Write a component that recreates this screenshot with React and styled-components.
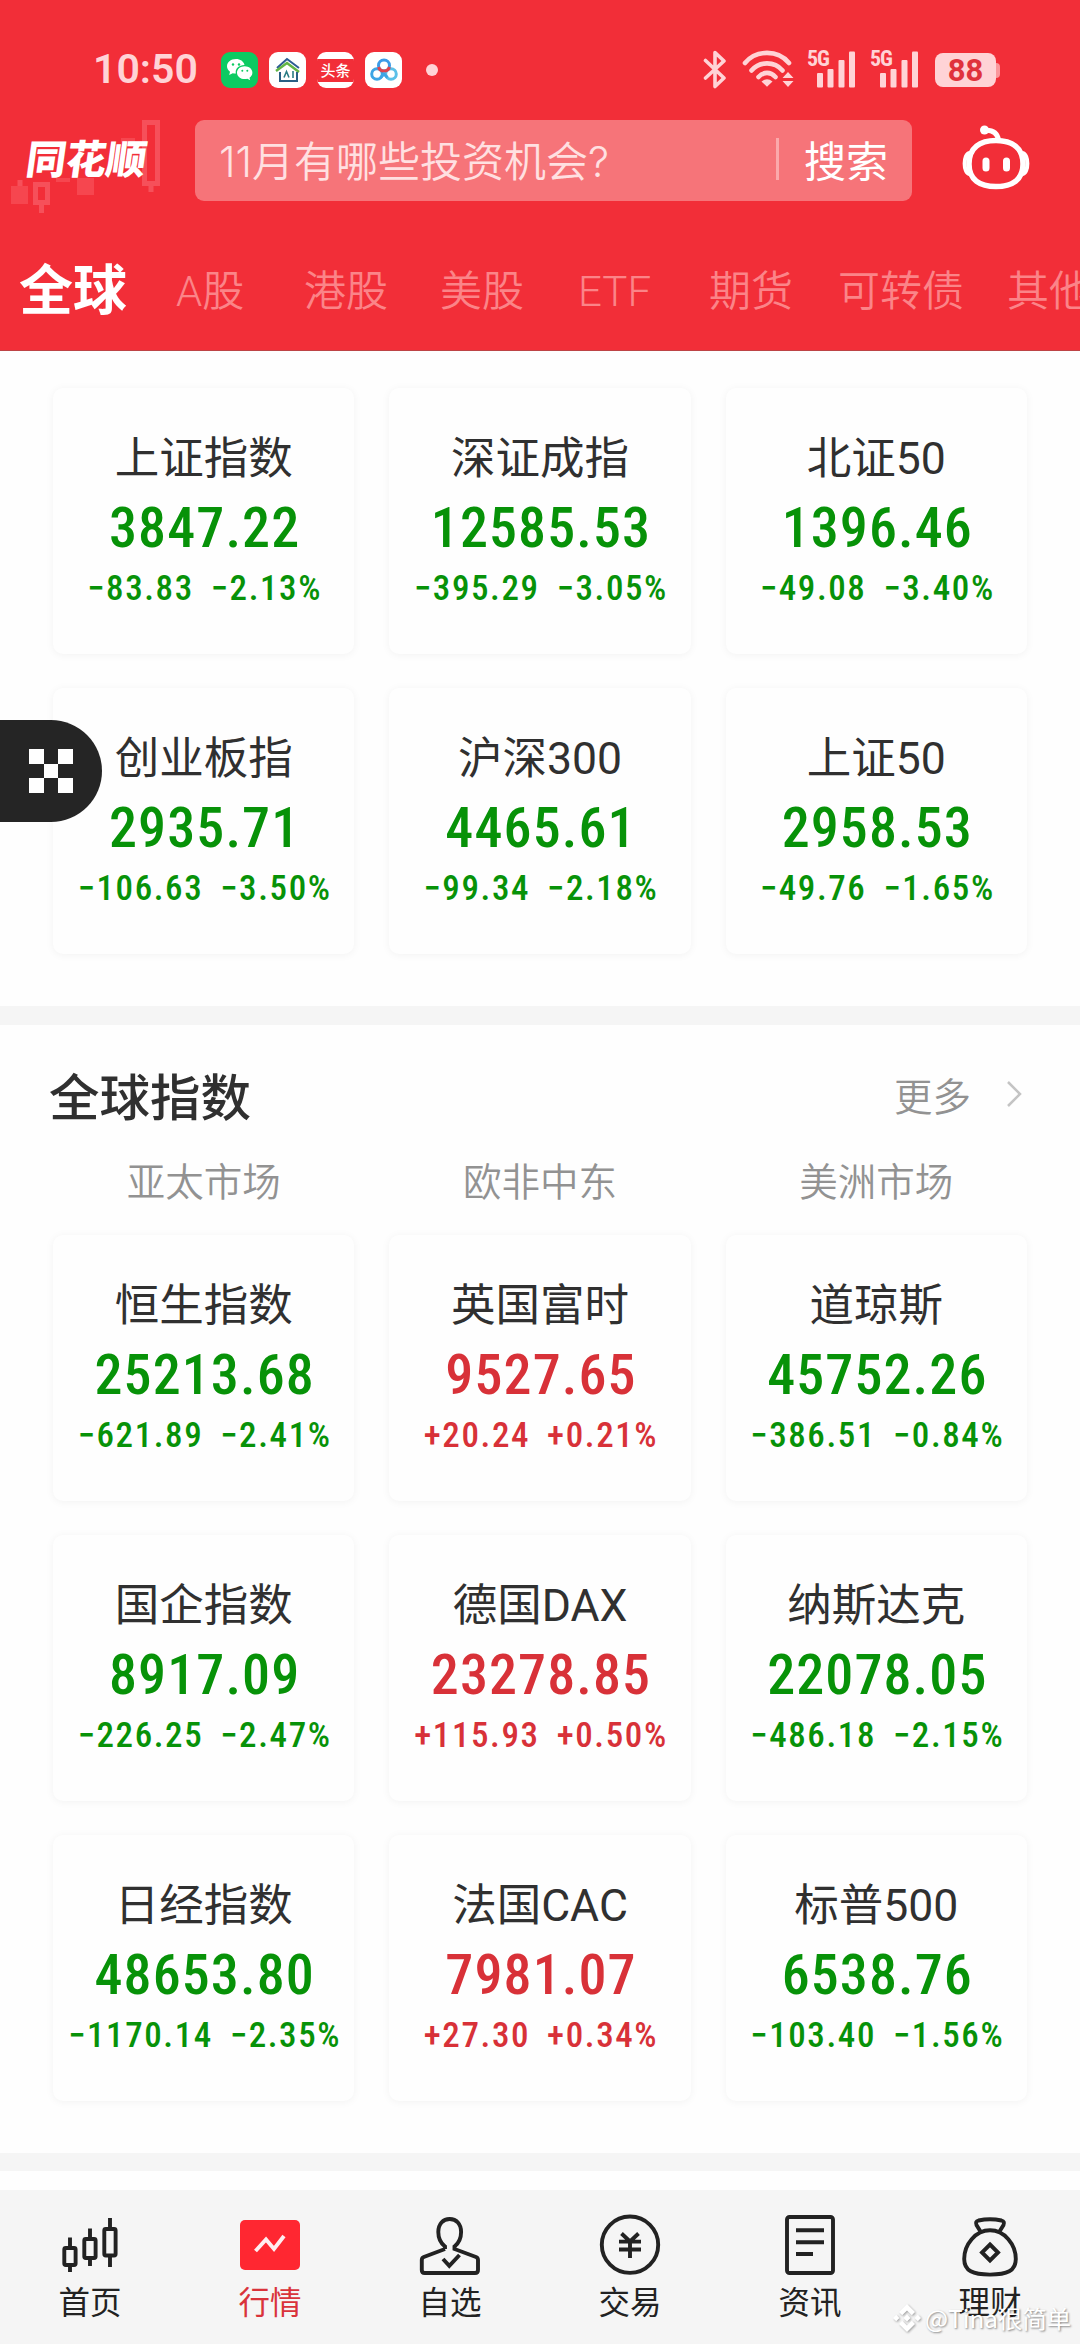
import React from "react";
import styled, { createGlobalStyle } from "styled-components";

const Global = createGlobalStyle`
  * { box-sizing: border-box; }
  body { margin: 0; background: #fefefe; }
`;

const cjk = `"Noto Sans CJK SC", sans-serif`;

const Screen = styled.div`
  position: relative;
  width: 1080px;
  height: 2344px;
  overflow: hidden;
  display: flex;
  flex-direction: column;
  background: #fefefe;
  font-family: ${cjk};
  color: #303030;
`;

const Header = styled.header`
  height: 351px;
  flex: none;
  background: #f22e38;
  border-bottom: 1px solid #bd4345;
  color: #fff;
`;

const StatusBar = styled.div`
  height: 120px;
  padding: 20px 80px 0 93px;
  display: flex;
  align-items: center;
  color: #ffd3d6;
`;

const Clock = styled.span`
  font: 600 41px/50px Roboto, sans-serif;
  width: 128px;
  padding-bottom: 2px;
`;

const AppIcons = styled.div`
  display: flex;
  gap: 11px;
  align-items: center;
  flex: 1;
`;

const AppTile = styled.div`
  width: 37px;
  height: 36px;
  border-radius: 9px;
  overflow: hidden;
  background: ${(p) => p.$bg || "#fff"};
  display: flex;
  align-items: center;
  justify-content: center;
`;

const NewsStrip = styled.span`
  width: 37px;
  height: 23px;
  background: #f22e38;
  color: #fff;
  text-align: center;
  white-space: nowrap;
  font: 500 15px/22px ${cjk};
`;

const MoreDot = styled.i`
  width: 12px;
  height: 12px;
  border-radius: 50%;
  background: #ffd3d6;
  margin-left: 13px;
`;

const StatusRight = styled.div`
  display: flex;
  align-items: center;
`;

const WifiIcon = styled.svg`
  margin: 0 14px 0 15.5px;
`;

const SignalIcon = styled.svg`
  overflow: visible;
  margin-right: ${(p) => p.$gap}px;
`;

const Battery = styled.div`
  width: 61px;
  height: 34px;
  border-radius: 8px;
  background: #ffd3d6;
  color: #e0323c;
  text-align: center;
  font: 700 31px/35px Roboto, sans-serif;
`;

const BatteryTip = styled.i`
  width: 4px;
  height: 15px;
  border-radius: 0 4px 4px 0;
  background: #fb979c;
`;

const SearchRow = styled.div`
  display: flex;
  height: 81px;
`;

const LogoBox = styled.div`
  position: relative;
  width: 195px;
  height: 81px;
  padding: 12px 0 0 27px;
`;

const LogoArt = styled.svg`
  position: absolute;
  left: 0;
  top: 0;
`;

const LogoText = styled.span`
  position: relative;
  display: block;
  font: 900 40px/50px ${cjk};
  transform: skewX(-8deg);
`;

const SearchBox = styled.div`
  width: 717px;
  height: 81px;
  border-radius: 9px;
  background: #f67479;
  display: flex;
  align-items: center;
  padding: 0 24px 4px 24px;
  font-size: 42px;
`;

const Placeholder = styled.span`
  flex: 1;
  font-family: Inter, ${cjk};
  font-weight: 350;
  color: #ffe0e1;
`;

const SearchAction = styled.span`
  border-left: 3px solid #fba9ab;
  padding-left: 25px;
  line-height: 42px;
  color: #fff;
`;

const Robot = styled.svg`
  margin-left: 48px;
`;

const Tabs = styled.nav`
  height: 149px;
  padding: 33px 0 0 18px;
  display: flex;
  align-items: center;
  white-space: nowrap;
  overflow: hidden;
`;

const Tab = styled.span`
  flex: none;
  width: ${(p) => p.$w}px;
  font-family: Roboto, ${cjk};
  font-size: 42px;
  line-height: 60px;
  font-weight: 350;
  color: #fb8488;
`;

const ActiveTab = styled(Tab)`
  font-size: 54px;
  font-weight: 700;
  color: #fff;
  padding: 0 0 1px 1px;
`;

const Grid = styled.section`
  display: grid;
  grid-template-columns: repeat(3, 1fr);
  grid-auto-rows: 266px;
  gap: 34px 35px;
  padding: 0 53px;
  margin-top: ${(p) => p.$top}px;
  flex: none;
`;

const Card = styled.article`
  border-radius: 10px;
  background: #fefefe;
  box-shadow: 0 1px 8px rgba(0, 0, 0, 0.05);
  display: flex;
  flex-direction: column;
  align-items: center;
  padding-top: 41px;
  white-space: nowrap;
`;

const Name = styled.h3`
  margin: 0;
  font-family: Roboto, ${cjk};
  font-size: 44.5px;
  line-height: 60px;
  font-weight: 400;
`;

const Price = styled.div`
  font: 500 56px/66px "Roboto Condensed", Roboto, sans-serif;
  margin-top: 6px;
  padding-left: 2px;
  letter-spacing: 1.1px;
  color: ${(p) => (p.$up ? "#d83138" : "#079208")};
`;

const Change = styled.div`
  font: 460 35px/40px "Roboto Condensed", Roboto, sans-serif;
  margin-top: 8px;
  padding-left: 2px;
  letter-spacing: 1.6px;
  display: flex;
  gap: 17px;
  color: ${(p) => (p.$up ? "#d83138" : "#079208")};
`;

const Band = styled.div`
  height: ${(p) => p.$h}px;
  margin-top: 52px;
  background: #f5f5f5;
  flex: none;
`;

const SectionHead = styled.div`
  display: flex;
  align-items: center;
  padding: 0 58px 0 49px;
  margin-top: 39px;
  height: 60px;
`;

const SectionTitle = styled.h2`
  margin: 0;
  flex: 1;
  font-size: 50.5px;
  line-height: 60px;
  font-weight: 450;
`;

const More = styled.span`
  font-size: 38.5px;
  font-weight: 350;
  color: #929292;
  margin-right: 35px;
`;

const Markets = styled.div`
  display: grid;
  grid-template-columns: repeat(3, 1fr);
  gap: 35px;
  padding: 0 53px;
  margin-top: 25px;
  height: 60px;
  text-align: center;
  font-size: 38.5px;
  line-height: 60px;
  font-weight: 350;
  color: #929292;
`;

const FloatButton = styled.button`
  position: absolute;
  left: 0;
  top: 720px;
  width: 102px;
  height: 102px;
  border: 0;
  padding: 0 0 0 29px;
  border-radius: 0 51px 51px 0;
  background: #252525;
  display: flex;
  align-items: center;
`;

const BottomNav = styled.nav`
  margin-top: auto;
  height: 154px;
  flex: none;
  background: #f5f5f5;
  display: grid;
  grid-template-columns: repeat(6, 1fr);
`;

const NavItem = styled.div`
  display: flex;
  flex-direction: column;
  align-items: center;
  padding-top: 23px;
  font-size: 31.5px;
  line-height: 40px;
  color: ${(p) => (p.$active ? "#d9333b" : "#222")};
`;

const NavIcon = styled.svg`
  margin-bottom: 3px;
  fill: none;
  stroke: #222;
  stroke-width: 3.9;
`;

const Watermark = styled.div`
  position: absolute;
  left: 893px;
  top: 2297px;
  height: 41px;
  display: flex;
  align-items: center;
  gap: 4px;
  font-size: 24.4px;
  line-height: 40px;
  color: #fff;
  white-space: nowrap;
  text-shadow: 1px 1px 2px rgba(0, 0, 0, 0.45);
  svg { filter: drop-shadow(1px 1px 1px rgba(0, 0, 0, 0.35)); }
`;

const domestic = [
  ["上证指数", "3847.22", "−83.83", "−2.13%"],
  ["深证成指", "12585.53", "−395.29", "−3.05%"],
  ["北证50", "1396.46", "−49.08", "−3.40%"],
  ["创业板指", "2935.71", "−106.63", "−3.50%"],
  ["沪深300", "4465.61", "−99.34", "−2.18%"],
  ["上证50", "2958.53", "−49.76", "−1.65%"],
];

const world = [
  ["恒生指数", "25213.68", "−621.89", "−2.41%"],
  ["英国富时", "9527.65", "+20.24", "+0.21%"],
  ["道琼斯", "45752.26", "−386.51", "−0.84%"],
  ["国企指数", "8917.09", "−226.25", "−2.47%"],
  ["德国DAX", "23278.85", "+115.93", "+0.50%"],
  ["纳斯达克", "22078.05", "−486.18", "−2.15%"],
  ["日经指数", "48653.80", "−1170.14", "−2.35%"],
  ["法国CAC", "7981.07", "+27.30", "+0.34%"],
  ["标普500", "6538.76", "−103.40", "−1.56%"],
];

const tabs = [["A股", 128], ["港股", 136], ["美股", 138], ["ETF", 131], ["期货", 129], ["可转债", 169], ["其他", 84]];

const navItems = [
  ["首页", (
    <>
      <rect x="6.300" y="35" width="11.300" height="17" rx="1.500" />
      <path d="M12 24.500V35M12 52v7" />
      <rect x="26.300" y="26" width="11.300" height="19" rx="1.500" />
      <path d="M32 15.500V26M32 45v8" />
      <rect x="46.300" y="16" width="11.300" height="26.500" rx="1.500" />
      <path d="M52 5v11M52 42v12" />
    </>
  )],
  ["行情", (
    <>
      <rect x="2" y="7" width="60" height="50" rx="5" fill="#ff2731" stroke="none" />
      <path d="M17.500 38L28 26.500l8 9.500L46 23" stroke="#ffeef0" />
    </>
  )],
  ["自选", (
    <>
      <path d="M27 36v-2.500C22.500 30 20.300 25.500 20.300 19 20.300 11 25 6 31.700 6S43.100 11 43.100 19c0 6.500-2.200 11-6.600 14.500V36L58 44q2 .8 2 3v10q0 3-3 3H6.800q-3 0-3-3V47q0-2.200 2-3L27 36" />
      <path d="M25 46l6.300 6.800L41.500 42" />
    </>
  )],
  ["交易", (
    <>
      <circle cx="32" cy="31.700" r="28.200" />
      <path d="M23.500 20.500l8.500 8 8.500-8M21 28.600h22M21 36.500h22M32 28v17" />
    </>
  )],
  ["资讯", (
    <>
      <rect x="9" y="4" width="46" height="56" rx="2.500" />
      <path d="M18 17.300h28M18 29.300h28M18 41h17" />
    </>
  )],
  ["理财", (
    <>
      <path d="M22.500 18.500L18.500 12q-1.500-3.500 2-4.500 11.500-2.500 23 0 3.500 1 2 4.500l-4 6.500" />
      <path d="M32 17.300C17.500 17.300 6.200 31.500 6.200 46c0 12 8.800 15.600 25.800 15.600S57.800 58 57.800 46C57.800 31.500 46.500 17.300 32 17.300z" />
      <path d="M32 31.500l8 8-8 8-8-8z" />
    </>
  )],
];

function Quotes({ items, top }) {
  return (
    <Grid $top={top}>
      {items.map(([name, price, diff, pct]) => {
        const up = diff.startsWith("+");
        return (
          <Card key={name}>
            <Name>{name}</Name>
            <Price $up={up}>{price}</Price>
            <Change $up={up}><span>{diff}</span><span>{pct}</span></Change>
          </Card>
        );
      })}
    </Grid>
  );
}

function Signal({ gap }) {
  return (
    <SignalIcon $gap={gap} width="50" height="40" viewBox="0 0 50 40" fill="#ffd3d6">
      <text x="-1" y="16" fontFamily="Roboto Condensed, sans-serif" fontWeight="700" fontSize="22" textLength="23">5G</text>
      <rect x="9" y="23" width="6" height="14.500" rx="1" />
      <rect x="19.500" y="19" width="6" height="18.500" rx="1" />
      <rect x="30.500" y="10" width="6" height="27.500" rx="1" />
      <rect x="41" y="1.500" width="6" height="36" rx="1" />
    </SignalIcon>
  );
}

export default function App() {
  return (
    <Screen>
      <Global />
      <Header>
        <StatusBar>
          <Clock>10:50</Clock>
          <AppIcons>
            <AppTile $bg="#0ccb62">
              <svg width="28" height="24" viewBox="0 0 28 24" fill="#fff">
                <path d="M10 1C4.500 1 1 4.300 1 8.300c0 2.300 1.100 4 3 5.400L3.200 17l3.500-1.800c1.100.3 2 .4 3.200.4-1.200-5 3-8.600 8.600-8.700C17.600 3.300 14.300 1 10 1z" />
                <path d="M18.700 8.300c-4.300 0-7.700 2.800-7.700 6.400s3.400 6.400 7.700 6.400c1 0 1.800-.1 2.700-.4l2.800 1.500-.7-2.500c1.700-1.200 2.900-2.900 2.900-5 0-3.600-3.400-6.400-7.700-6.400z" />
                <g fill="#0ccb62"><circle cx="7" cy="6.500" r="1.200" /><circle cx="13" cy="6.500" r="1.200" /><circle cx="16.300" cy="12.800" r="1" /><circle cx="21.300" cy="12.800" r="1" /></g>
              </svg>
            </AppTile>
            <AppTile>
              <svg width="28" height="28" viewBox="0 0 28 28" fill="none" strokeWidth="2">
                <path d="M3 12L13 3l4 3 8 6" stroke="#2d5c93" />
                <path d="M2 15L13 7l12 9" stroke="#62b544" strokeWidth="2.500" />
                <path d="M6 16v9h17v-9" stroke="#2a5f84" />
                <path d="M10 21.500l2.500-6 2.500 6M19 15v7" stroke="#2a7c84" strokeWidth="1.600" />
              </svg>
            </AppTile>
            <AppTile><NewsStrip>头条</NewsStrip></AppTile>
            <AppTile>
              <svg width="30" height="26" viewBox="0 0 30 26" fill="none" strokeWidth="3">
                <circle cx="8" cy="17" r="5.300" stroke="#3da5e5" />
                <circle cx="22" cy="17" r="5.300" stroke="#5bc0e8" />
                <circle cx="15" cy="8.500" r="5.500" stroke="#3b9be8" />
                <path d="M9.600 10c1.500 5.300 9.300 5.300 10.800 0" stroke="#e0434c" />
                <path d="M11.500 20.500L15 17l3.500 3.500" stroke="#3da5e5" />
              </svg>
            </AppTile>
            <MoreDot />
          </AppIcons>
          <StatusRight>
            <svg width="24" height="40" viewBox="0 0 24 40" fill="none" stroke="#ffd3d6" strokeWidth="3.600" strokeLinejoin="round" strokeLinecap="round">
              <path d="M2.500 10.500L21 28l-9 8.500v-34L21 11 2.500 28" />
            </svg>
            <WifiIcon width="52" height="40" viewBox="0 0 52 40" fill="none" stroke="#ffd3d6" strokeWidth="4.600" strokeLinecap="round">
              <path d="M3 13C14-.500 36-.500 47 13M9.500 20.500c8-9.500 23-9.500 31 0M16.500 27c5-5.500 12-5.500 17 0" />
              <path d="M19.500 31.500q5.500-4.500 11 0L25 36.800z" fill="#ffd3d6" stroke="none" />
              <path d="M46 22l5.500 6h-11zM46 37l5.500-6h-11z" fill="#ffd3d6" stroke="none" />
            </WifiIcon>
            <Signal gap={13} />
            <Signal gap={14} />
            <Battery>88</Battery>
            <BatteryTip />
          </StatusRight>
        </StatusBar>
        <SearchRow>
          <LogoBox>
            <LogoArt width="195" height="95" viewBox="0 0 195 95" fill="none" stroke="#f6505a" strokeWidth="5">
              <path d="M144.500 2.500h13v61h-13zM151 66v6" />
              <path d="M35.500 64.500h12v18h-12zM41.500 84v9M20 60v7" />
              <path d="M11 66h17v18H11zM77 58h17v17H77zM56 58h14v4H56zM121 18h14v4h-14z" fill="#f6464f" stroke="none" />
            </LogoArt>
            <LogoText>同花顺</LogoText>
          </LogoBox>
          <SearchBox>
            <Placeholder>11月有哪些投资机会?</Placeholder>
            <SearchAction>搜索</SearchAction>
          </SearchBox>
          <Robot width="72" height="72" viewBox="0 0 72 72" fill="none" stroke="#fff" strokeWidth="5.500">
            <path d="M36 20.500C20 20.500 9 28 9 44S20 66.500 36 66.500 63 60 63 44 52 20.500 36 20.500z" />
            <path d="M9.500 33C3 34 3 53 9.500 54M62.500 33c6.500 1 6.500 20 0 21" strokeWidth="4" />
            <path d="M38.500 20c-1-7-6-10-13-9.800" strokeWidth="5" />
            <circle cx="24.500" cy="10" r="4.500" fill="#fff" stroke="none" />
            <path d="M26 41v7M46.500 41v7" strokeWidth="7" strokeLinecap="round" />
          </Robot>
        </SearchRow>
        <Tabs>
          <ActiveTab $w={158}>全球</ActiveTab>
          {tabs.map(([t, w]) => <Tab key={t} $w={w}>{t}</Tab>)}
        </Tabs>
      </Header>
      <Quotes items={domestic} top={37} />
      <Band $h={19} />
      <SectionHead>
        <SectionTitle>全球指数</SectionTitle>
        <More>更多</More>
        <svg width="16" height="28" viewBox="0 0 16 28" fill="none" stroke="#c4c4c4" strokeWidth="2.500"><path d="M2 2l12 12L2 26" /></svg>
      </SectionHead>
      <Markets><span>亚太市场</span><span>欧非中东</span><span>美洲市场</span></Markets>
      <Quotes items={world} top={26} />
      <Band $h={18} />
      <BottomNav>
        {navItems.map(([label, art]) => (
          <NavItem key={label} $active={label === "行情"}>
            <NavIcon width="64" height="64" viewBox="0 0 64 64">{art}</NavIcon>
            {label}
          </NavItem>
        ))}
      </BottomNav>
      <FloatButton>
        <svg width="44" height="44" viewBox="0 0 44 44" fill="#fff"><path d="M0 0h15v15H0zM29 0h15v15H29zM15 15h14v14H15zM0 29h15v15H0zM29 29h15v15H29z" /></svg>
      </FloatButton>
      <Watermark>
        <svg width="28" height="28" viewBox="0 0 28 28" fill="#fff">
          <path d="M14 0l8 8-3.200 3.200L14 6.400 9.200 11.200 6 8zM3.200 10.800L6.400 14l-3.200 3.200L0 14zM24.800 10.800L28 14l-3.200 3.200-3.200-3.200zM14 10.500l3.500 3.500-3.500 3.500-3.500-3.500zM14 28l8-8-3.200-3.200-4.800 4.800-4.800-4.800L6 20z" />
        </svg>
        <span>@Tina很简单</span>
      </Watermark>
    </Screen>
  );
}
